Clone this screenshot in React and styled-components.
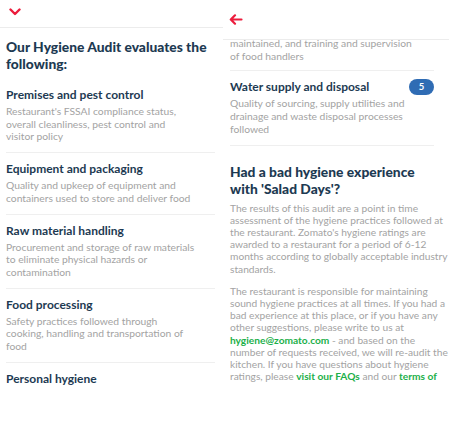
import React from 'react'
import styled, { createGlobalStyle } from 'styled-components'

const Global = createGlobalStyle`
  html, body { margin: 0; padding: 0; background: #fff; }
  body { font-family: "Lato", "Open Sans", sans-serif; width: 449px; height: 425px; overflow: hidden; }
`

const Screens = styled.div`
  display: flex;
  width: 449px;
  height: 425px;
  overflow: hidden;
`

const Screen = styled.div`
  width: ${({ w }) => w}px;
  flex-shrink: 0;
  display: flex;
  flex-direction: column;
  overflow: hidden;
`

const TopBar = styled.div`
  height: ${({ h }) => h}px;
  flex-shrink: 0;
  display: flex;
  align-items: ${({ align }) => align || 'center'};
  padding: ${({ pt }) => pt || 0}px 0 0 ${({ pl }) => pl}px;
  border-bottom: 1px solid #ececec;
  box-sizing: border-box;
`

const Content = styled.div`
  padding: 0 ${({ pr }) => pr}px 0 ${({ pl }) => pl}px;
`

const MainTitle = styled.h1`
  margin: 10px 0 14px;
  font-size: 13.8px;
  line-height: 17px;
  font-weight: 900;
  color: #1d3a52;
`

const Item = styled.div`
  padding: ${({ first }) => (first ? '0' : '7px')} 0 ${({ pb }) => pb || 9}px;
  margin-right: ${({ mr }) => mr || 0}px;
  border-bottom: ${({ last }) => (last ? 'none' : '1px solid #efefef')};
`

const ItemHead = styled.div`
  display: flex;
  align-items: center;
  justify-content: space-between;
`

const ItemTitle = styled.div`
  font-size: 12px;
  line-height: 17px;
  font-weight: 700;
  color: #1d3a52;
`

const Desc = styled.div`
  margin-top: 2px;
  font-size: 10.3px;
  line-height: 12.7px;
  color: #a3a3a3;
`

const Line = styled.span`
  display: block;
  white-space: nowrap;
`

const Badge = styled.div`
  width: 25px;
  height: 16px;
  border-radius: 8px;
  background: #2f6cb4;
  color: #fff;
  font-size: 9.5px;
  font-weight: 700;
  display: flex;
  align-items: center;
  justify-content: center;
`

const Heading = styled.h2`
  margin: 17px 0 5px;
  font-size: 13.8px;
  line-height: 17px;
  font-weight: 900;
  color: #1d3a52;
`

const Para = styled.p`
  margin: 0 0 10px;
  font-size: 10.2px;
  line-height: 12.2px;
  color: #a3a3a3;
`

const Link = styled.span`
  color: #1cb04a;
  font-weight: 700;
`

const ChevronDown = () => (
  <svg width="12" height="8" viewBox="0 0 12 8">
    <path d="M1.5 1.5 L6 6 L10.5 1.5" fill="none" stroke="#ec1c3c" strokeWidth="2.4" strokeLinecap="round" strokeLinejoin="round" />
  </svg>
)

const ArrowLeft = () => (
  <svg width="14" height="11" viewBox="0 0 14 11">
    <path d="M12.5 5.5 H2 M6 1.3 L1.8 5.5 L6 9.7" fill="none" stroke="#ec1c3c" strokeWidth="2.2" strokeLinecap="round" strokeLinejoin="round" />
  </svg>
)

const Lines = ({ lines }) => lines.map((l, i) => <Line key={i}>{l}</Line>)

const audit = [
  { title: 'Premises and pest control', desc: ["Restaurant's FSSAI compliance status,", 'overall cleanliness, pest control and', 'visitor policy'] },
  { title: 'Equipment and packaging', desc: ['Quality and upkeep of equipment and', 'containers used to store and deliver food'] },
  { title: 'Raw material handling', desc: ['Procurement and storage of raw materials', 'to eliminate physical hazards or', 'contamination'] },
  { title: 'Food processing', desc: ['Safety practices followed through', 'cooking, handling and transportation of', 'food'] },
  { title: 'Personal hygiene' },
]

const results = [
  'The results of this audit are a point in time',
  'assessment of the hygiene practices followed at',
  "the restaurant. Zomato's hygiene ratings are",
  'awarded to a restaurant for a period of 6-12',
  'months according to globally acceptable industry',
  'standards.',
]

const responsible = [
  'The restaurant is responsible for maintaining',
  'sound hygiene practices at all times. If you had a',
  'bad experience at this place, or if you have any',
  'other suggestions, please write to us at',
  <><Link>hygiene@zomato.com</Link> - and based on the</>,
  'number of requests received, we will re-audit the',
  'kitchen. If you have questions about hygiene',
  <>ratings, please <Link>visit our FAQs</Link> and our <Link>terms of</Link></>,
]

export default function App() {
  return (
    <>
      <Global />
      <Screens>
        <Screen w={223}>
          <TopBar h={28} pl={9} pt={8} align="flex-start">
            <ChevronDown />
          </TopBar>
          <Content pl={6} pr={8}>
            <MainTitle>Our Hygiene Audit evaluates the following:</MainTitle>
            {audit.map((a, i) => (
              <Item key={i} first={i === 0} last={i === audit.length - 1}>
                <ItemTitle>{a.title}</ItemTitle>
                {a.desc && <Desc><Lines lines={a.desc} /></Desc>}
              </Item>
            ))}
          </Content>
        </Screen>
        <Screen w={226}>
          <TopBar h={40} pl={6}>
            <ArrowLeft />
          </TopBar>
          <Content pl={7} pr={8}>
            <Item first pb={8} mr={7}>
              <Desc style={{ marginTop: -3 }}>
                <Lines lines={['maintained, and training and supervision', 'of food handlers']} />
              </Desc>
            </Item>
            <Item mr={7}>
              <ItemHead>
                <ItemTitle>Water supply and disposal</ItemTitle>
                <Badge>5</Badge>
              </ItemHead>
              <Desc>
                <Lines lines={['Quality of sourcing, supply utilities and', 'drainage and waste disposal processes', 'followed']} />
              </Desc>
            </Item>
            <Heading>
              <Line>Had a bad hygiene experience</Line>
              <Line>with 'Salad Days'?</Line>
            </Heading>
            <Para><Lines lines={results} /></Para>
            <Para><Lines lines={responsible} /></Para>
          </Content>
        </Screen>
      </Screens>
    </>
  )
}
